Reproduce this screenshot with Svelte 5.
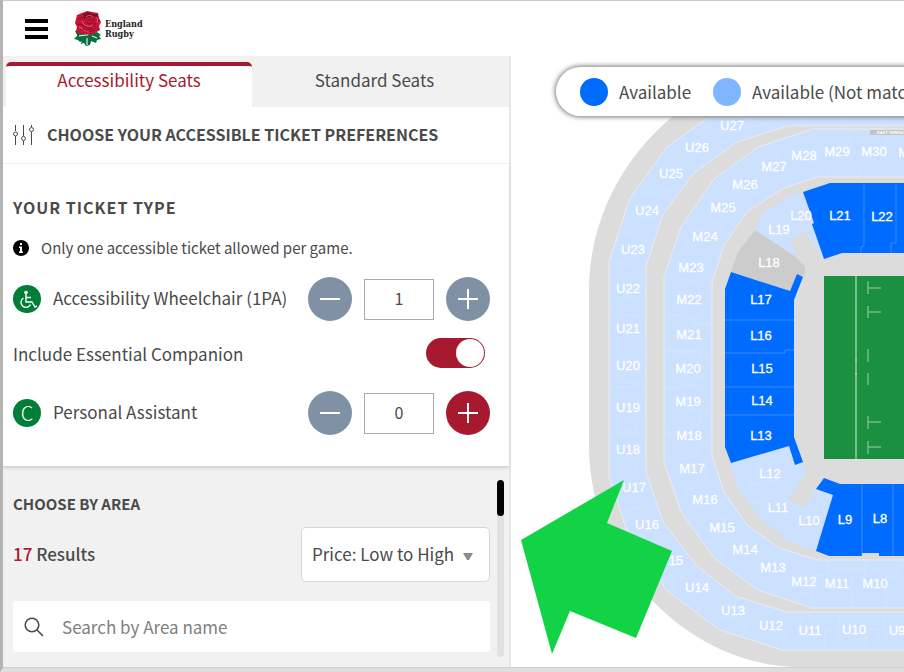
<script>
    let activeTab = $state('accessible');
    let wheelchair = $state(1);
    let assistant = $state(0);
    let companion = $state(true);
    let sort = $state('low');
    let search = $state('');

    const ringLabels = [
        ['U27', 732, 126], ['U26', 697, 148], ['U25', 671, 174], ['U24', 647, 211],
        ['U23', 633, 250], ['U22', 628, 289], ['U21', 628, 329], ['U20', 628, 366],
        ['U19', 628, 408], ['U18', 628, 450], ['U17', 634, 488], ['U16', 647, 525],
        ['U15', 671, 561], ['U14', 697, 588], ['U13', 733, 611], ['U12', 771, 626],
        ['U11', 810, 631], ['U10', 854, 630], ['U9', 897, 631],
        ['M31', 911, 153], ['M30', 874, 152], ['M29', 837, 152], ['M28', 804, 156],
        ['M27', 774, 167], ['M26', 745, 185], ['M25', 723, 208], ['M24', 705, 237],
        ['M23', 691, 268], ['M22', 689, 300], ['M21', 689, 335], ['M20', 688, 369],
        ['M19', 688, 402], ['M18', 689, 436], ['M17', 692, 469], ['M16', 705, 500],
        ['M15', 722, 528], ['M14', 745, 550], ['M13', 773, 568], ['M12', 804, 582],
        ['M11', 837, 584], ['M10', 875, 584], ['M9', 914, 584],
        ['L20', 801, 216], ['L19', 779, 230], ['L18', 769, 263],
        ['L12', 770, 474], ['L11', 778, 508], ['L10', 809, 521]
    ];

    const openLabels = [
        ['L21', 840, 216], ['L22', 882, 217], ['L17', 761, 300], ['L16', 761, 336],
        ['L15', 762, 369], ['L14', 762, 401], ['L13', 761, 436], ['L9', 845, 520],
        ['L8', 880, 519]
    ];

    // lines between neighbouring blocks
    const dividers = [
        'M748 117l6 10 14-5 10 10', 'M802 89v36', 'M840 89v36', 'M886 89v36',
        'M700 123l20 27', 'M668 147l30 25', 'M643 180l30 20', 'M621 227l3 5 10 2 2 3 16 6',
        'M609 262l31 4v16l5 1', 'M609 310h10v5h21v3', 'M645 355h-4v-10', 'M609 387h28v-2h8',
        'M609 433h15v-3h12v-9h4v-3', 'M609 477l27-5 2-15 5-2', 'M620 513l25-8 3-8',
        'M642 552l22-17', 'M668 592l28-28', 'M698 611l24-26', 'M742 637l12-28', 'M782 650l5-20h15v-18',
        'M825 650v-20h14v-18', 'M866 650v-21h18v-17',
        'M812 131l4 34', 'M850 129v36', 'M886 129v36', 'M827 177v-10', 'M861 177v-12',
        'M774 147l6 18 19 6', 'M744 157l35 38', 'M716 180l34 31', 'M695 206l35 29',
        'M680 235l12 10 2 4 18 8', 'M664 277l33 5 3 10 12 2', 'M664 315h19v3h12v6h17',
        'M664 351h35v7h13', 'M664 388h20v-3h12', 'M664 433h27v-8h8v-14h13', 'M664 462l33-7 3-12h12',
        'M676 494l28-10 4-12', 'M692 530l30-24', 'M714 558l32-31', 'M748 583l25-38', 'M777 597l10-17 10-6 6-17',
        'M811 607l3-32h14v-15', 'M851 608v-30h14v-18', 'M886 608v-31h12v-17',
        'M777 204l20 27', 'M738 487l38-7 14-18', 'M775 530l18-24'
    ];

    const pitchMarks = [
        'M868 281v13M868 288h13', 'M868 306v12M868 312h13', 'M868 349v13', 'M868 373v12',
        'M868 416v13M868 422h13', 'M868 441v13M868 447h13'
    ];
</script>

<div class="page">
    <header class="topbar">
        <button class="menu" aria-label="Menu"><span></span><span></span><span></span></button>
        <a class="brand" href="/" aria-label="England Rugby">
            <svg class="rose" viewBox="0 0 28 36" aria-hidden="true">
                <g fill="#08703f">
                    <path d="M1 20l7-1 5 5-3 3-6-1z" />
                    <path d="M0 28l4-4 7 1 2 3-7 3-2-2z" />
                    <path d="M9 26l6-2 3 3-2 7-4 1-2-3-3 1z" />
                    <path d="M14 24l9-3 4 3-2 1 2 3-4 1-1 3-5-2z" />
                </g>
                <path d="M5 25l7-1m1 3v7m5-9l5 2" stroke="#fff" fill="none" />
                <path d="M8 2l5-2 5 1 6 1 1 5 2 4-2 4 1 4-5 3-5 2-5-1-6 0-3-3 1-4-2-4 1-4 1-4z" fill="#c91335" />
                <path d="M9 3l6-2 4 2 5 0v4l-4-2-5 1-5 1z" fill="#74132a" />
                <path d="M5 9c1-3 4-3 5-1m0 0c3-4 10-3 10 1s-6 5-8 2m1-1c1-2 4-2 4 0M4 14c3-2 6 1 8 2s6 1 9-3 3-3 5-3M6 19c3-4 5 0 7 1s5 1 9-3m-10 3c2-2 4-2 6-2" stroke="#6d1428" fill="none" stroke-width=".8" />
                <path d="M8 10c2 5 7 7 11 4m3-8c2 1 2 4 1 6M5 16l4 2M12 6c2-2 5-2 7 0M10 20c2-1 3 1 5 1" stroke="#ef7a8d" fill="none" stroke-width=".7" />
            </svg>
            <span>England<br />Rugby</span>
        </a>
    </header>

    <main>
        <aside>
            <div class="tabs" role="tablist">
                <button role="tab" aria-selected={activeTab === 'accessible'} class:active={activeTab === 'accessible'} onclick={() => (activeTab = 'accessible')}>Accessibility Seats</button>
                <button role="tab" aria-selected={activeTab === 'standard'} class:active={activeTab === 'standard'} onclick={() => (activeTab = 'standard')}>Standard Seats</button>
            </div>

            <div class="preferences">
                <svg width="22" height="22" viewBox="0 0 22 22" fill="none" stroke="#4a4a4a" aria-hidden="true">
                    <path d="M2.500 1v6M2.500 12v9M10.500 1v11M10.500 17v4M18.500 1v2M18.500 8v13" />
                    <circle cx="2.500" cy="10" r="2" />
                    <circle cx="10.500" cy="14.500" r="2" />
                    <circle cx="18.500" cy="5.500" r="2" />
                </svg>
                <h1>CHOOSE YOUR ACCESSIBLE TICKET PREFERENCES</h1>
            </div>

            <section class="ticket-type">
                <h2>YOUR TICKET TYPE</h2>
                <p class="note">
                    <svg width="16" height="16" viewBox="0 0 16 16" aria-hidden="true">
                        <circle cx="8" cy="8" r="8" />
                        <path d="M7 3h2v2H7zM6 6.500h3v5h1V13H6v-1.500h1V8H6z" fill="#fff" />
                    </svg>
                    Only one accessible ticket allowed per game.
                </p>
                <div class="row">
                    <svg width="28" height="28" viewBox="0 0 28 28" aria-hidden="true">
                        <circle cx="14" cy="14" r="14" fill="#007d37" />
                        <circle cx="13" cy="7.500" r="1.800" fill="#fff" />
                        <path d="M13 9v8h6l3 5 2-1M13 12.500h5M10.500 13a5 5 0 1 0 7 6.500" fill="none" stroke="#fff" stroke-width="1.400" />
                    </svg>
                    <label for="wheelchair">Accessibility Wheelchair (1PA)</label>
                    <div class="stepper">
                        <button class="minus" aria-label="Remove wheelchair ticket" onclick={() => (wheelchair = Math.max(0, wheelchair - 1))}></button>
                        <input id="wheelchair" type="text" bind:value={wheelchair} />
                        <button class="plus" aria-label="Add wheelchair ticket"></button>
                    </div>
                </div>
                <div class="row companion">
                    <label for="companion">Include Essential Companion</label>
                    <input id="companion" class="toggle" type="checkbox" bind:checked={companion} />
                </div>
                <div class="row">
                    <span class="badge" aria-hidden="true">C</span>
                    <label for="assistant">Personal Assistant</label>
                    <div class="stepper">
                        <button class="minus" aria-label="Remove personal assistant" onclick={() => (assistant = Math.max(0, assistant - 1))}></button>
                        <input id="assistant" type="text" bind:value={assistant} />
                        <button class="plus enabled" aria-label="Add personal assistant" onclick={() => (assistant += 1)}></button>
                    </div>
                </div>
            </section>

            <section class="areas">
                <div class="areas-content">
                    <h2>CHOOSE BY AREA</h2>
                    <div class="results">
                        <p><span>17</span> Results</p>
                        <div class="select">
                            <select aria-label="Sort areas" bind:value={sort}>
                                <option value="low">Price: Low to High</option>
                                <option value="high">Price: High to Low</option>
                            </select>
                            <svg width="10" height="8" viewBox="0 0 10 8" aria-hidden="true"><path d="M0 0h10L6 7H4z" fill="#8d8d8d" /></svg>
                        </div>
                    </div>
                    <div class="search">
                        <svg width="20" height="20" viewBox="0 0 20 20" fill="none" stroke="#4a4a4a" stroke-width="1.600" aria-hidden="true">
                            <circle cx="8" cy="8" r="6.800" />
                            <path d="M13 13l6 6" />
                        </svg>
                        <input type="text" aria-label="Search by Area name" placeholder="Search by Area name" bind:value={search} />
                    </div>
                </div>
                <div class="scrollbar"><span></span></div>
            </section>
        </aside>

        <div class="map">
            <svg class="stadium" viewBox="511 56 393 611" preserveAspectRatio="xMinYMin slice" role="img" aria-label="Stadium seating map">
                <path d="M1100 69H800C690 69 589 170 589 290v156c0 120 101 221 211 221h300z" fill="#dcdcdc" />
                <g stroke="#ececec">
                    <path d="M1100 89H782l-62 20-53 38-37 51-21 64v215l19 57 40 58 52 38 62 20h318v-38H787l-52-16-39-31-33-43-17-50V266l17-52 31-41 43-31 50-16h313z" fill="#cce0ff" />
                    <path d="M1100 129H812l-54 18-45 33-32 47-17 50v185l17 50 33 46 44 32 54 18h288v-48H818l-39-12-32-23-23-33-12-37V283l12-38 23-33 35-23 36-12h282z" fill="#cce0ff" />
                </g>
                <g fill="#cce0ff">
                    <path d="M803 192l-11 3-29 18-8 17 35 27 6-6-6-10 14-10 20 28z" />
                    <path d="M731 463l58-17 6 19 6-2 5 4v6l-18 26 15 10 13-20 17 6-17 56-26-9-30-24-23-31z" />
                </g>
                <path d="M755 230l38 25 12 11v7l-2 4-6-3-7 17-59-19 7-20z" fill="#ccc" />
                <g fill="#006bff">
                    <path d="M803 192l27-9h270v70H842l-18 6-12-35 2-1z" />
                    <path d="M731 272l59 19 7-17 6 3-9 23v137l9 25-8 3-6-19-58 17-6-16V289z" />
                    <path d="M824 478l16 6h260v72H829l-13-5 17-56-17-6z" />
                </g>
                <path d="M864 183v63l-3 1v6M896 183v60h-5v10M725 320h69M725 353h60v-3h9M725 387h69M725 415h69M862 484v72M893 484v72" stroke="#3c8cff" fill="none" />
                <path d="M862 553h17v3h-17z" fill="#dcdcdc" />
                <path d="M824 276h276v183H824z" fill="#1c9041" />
                <path d="M856 276v183M855 360h2M855 374h2" stroke="#a9d6b6" stroke-width="1.300" />
                <g stroke="#9fceab" fill="none">
                    {#each pitchMarks as mark}
                        <path d={mark} />
                    {/each}
                </g>
                <g stroke="#d5e5fd" fill="none">
                    {#each dividers as line}
                        <path d={line} />
                    {/each}
                </g>
                <path d="M870 130h80v5h-80z" fill="#c4c4c4" />
                <text class="terrace" x="877" y="134">EAST TERRACE</text>
                <g class="labels">
                    {#each ringLabels as [name, x, y]}
                        <text {x} {y} dy="4">{name}</text>
                    {/each}
                </g>
                <g class="labels open">
                    {#each openLabels as [name, x, y]}
                        <text {x} {y} dy="4">{name}</text>
                    {/each}
                </g>
                <path d="M521 540l103-60-17 43 65 28-36 87-66-27-18 43z" fill="#12d345" />
            </svg>
            <ul class="legend">
                <li><i class="available"></i>Available</li>
                <li><i></i>Available (Not matching filters)</li>
            </ul>
        </div>
    </main>
</div>

<style>
    :global(body) {
        background: #dedede;
    }

    .page {
        display: flex;
        flex-direction: column;
        box-sizing: border-box;
        height: 100vh;
        border-top: 1px solid #c9c9c9;
        border-left: 3px solid #b4b4b4;
        border-bottom: 4px solid #dedede;
        overflow: hidden;
        background: #fff;
        color: #4a4a4a;
        font-family: "Noto Sans CJK SC", "Open Sans", sans-serif;
        font-size: 17px;
        line-height: 24px;
    }

    button, input, select {
        box-sizing: border-box;
        margin: 0;
        font: inherit;
        color: inherit;
    }

    button {
        border: 0;
        padding: 0;
        cursor: pointer;
    }

    h1, h2, p, ul {
        margin: 0;
        padding: 0;
    }

    .topbar {
        display: flex;
        align-items: center;
        gap: 26px;
        height: 55px;
        padding-left: 22px;
        flex-shrink: 0;
    }

    .menu {
        display: flex;
        flex-direction: column;
        gap: 4px;
        background: none;
    }

    .menu span {
        width: 23px;
        height: 4px;
        background: #000;
    }

    .brand {
        display: flex;
        align-items: center;
        gap: 3px;
        color: #222;
        font-family: "DejaVu Serif Condensed", "DejaVu Serif", serif;
        font-size: 9px;
        font-weight: bold;
        line-height: 10px;
        text-decoration: none;
    }

    .rose {
        width: 28px;
        height: 36px;
    }

    main {
        display: flex;
        flex: 1;
        min-height: 0;
        border-bottom: 1px solid #cfcfcf;
    }

    aside {
        display: flex;
        flex-direction: column;
        box-sizing: border-box;
        width: 508px;
        flex-shrink: 0;
        border-right: 2px solid #e6e6e6;
    }

    .tabs {
        display: flex;
        padding: 6px 12px 0 3px;
        background: #f1f1f1;
    }

    .tabs button {
        flex: 1;
        height: 45px;
        padding-bottom: 14px;
        border-top: 4px solid transparent;
        background: none;
    }

    .tabs button.active {
        flex: 0 0 246px;
        border-color: #a6192e;
        border-radius: 5px 5px 0 0;
        background: #fff;
        color: #a6192e;
    }

    .preferences {
        display: flex;
        align-items: center;
        gap: 12px;
        height: 56px;
        padding-left: 10px;
        border-bottom: 1px solid #f1f1f1;
    }

    .preferences svg {
        flex-shrink: 0;
    }

    h1 {
        padding-bottom: 2px;
        font-size: 16px;
        font-weight: bold;
        white-space: nowrap;
    }

    .ticket-type {
        position: relative;
        padding: 31px 19px 31px 10px;
        box-shadow: 0 2px 3px #ccc;
    }

    .ticket-type h2 {
        font-size: 16px;
        font-weight: bold;
        letter-spacing: 1px;
    }

    .note {
        display: flex;
        align-items: center;
        gap: 12px;
        margin: 17px 0;
        font-size: 15px;
    }

    .row {
        display: flex;
        align-items: center;
        gap: 12px;
    }

    .row label {
        flex: 1;
        padding-bottom: 2px;
    }

    .companion {
        height: 70px;
        padding-right: 5px;
        padding-bottom: 6px;
        box-sizing: border-box;
    }

    .companion label {
        padding: 2px 0 0;
    }

    .badge {
        width: 28px;
        border-radius: 50%;
        background: #007d37;
        color: #fff;
        font-weight: 300;
        font-size: 20px;
        line-height: 28px;
        text-align: center;
    }

    .stepper {
        display: flex;
        align-items: center;
        gap: 12px;
    }

    .stepper input {
        width: 70px;
        height: 41px;
        padding: 0 0 2px;
        border: 1px solid #aaa;
        text-align: center;
        font-size: 16px;
    }

    .stepper button {
        display: grid;
        place-items: center;
        width: 44px;
        height: 44px;
        border-radius: 50%;
        background: #8091a5;
    }

    .stepper button.enabled {
        background: #a6192e;
    }

    .stepper button::before, .plus::after {
        grid-area: 1 / 1;
        width: 20px;
        height: 2px;
        background: #fff;
        content: "";
    }

    .plus::after {
        width: 2px;
        height: 20px;
    }

    .toggle {
        display: flex;
        width: 59px;
        height: 30px;
        padding: 1px;
        border-radius: 15px;
        appearance: none;
        background: #aaa;
    }

    .toggle::after {
        width: 28px;
        height: 28px;
        border-radius: 50%;
        background: #fff;
        content: "";
    }

    .toggle:checked {
        justify-content: flex-end;
        background: #a6192e;
    }

    .areas {
        display: flex;
        flex: 1;
        gap: 7px;
        padding: 14px 5px 10px 10px;
        background: #f1f1f1;
    }

    .areas-content {
        flex: 1;
        padding-top: 12px;
    }

    .areas h2 {
        font-size: 15px;
    }

    .results {
        display: flex;
        align-items: center;
        justify-content: space-between;
        margin: 11px 0 19px;
    }

    .results p {
        padding-bottom: 2px;
        font-weight: 500;
    }

    .results span {
        color: #b31b34;
    }

    .select {
        display: grid;
        align-items: center;
        width: 189px;
    }

    .select select {
        grid-area: 1 / 1;
        height: 55px;
        padding: 0 10px 2px;
        border: 1px solid #d6d6d6;
        border-radius: 5px;
        appearance: none;
        background: #fff;
    }

    .select svg {
        grid-area: 1 / 1;
        justify-self: end;
        margin: 5px 17px 0 0;
        pointer-events: none;
    }

    .search {
        display: flex;
        align-items: center;
        gap: 18px;
        height: 51px;
        padding: 0 11px;
        border-radius: 4px;
        background: #fff;
    }

    .search input {
        flex: 1;
        min-width: 0;
        padding: 0;
        border: 0;
        background: none;
    }

    .search input::placeholder {
        color: #808080;
        opacity: 1;
    }

    .scrollbar {
        width: 7px;
        border-radius: 4px;
        background: #e1e1e1;
    }

    .scrollbar span {
        display: block;
        height: 36px;
        border-radius: 4px;
        background: #000;
    }

    .map {
        position: relative;
        flex: 1;
        min-width: 0;
        overflow: hidden;
    }

    .stadium {
        display: block;
        width: 100%;
        height: 100%;
    }

    .labels {
        fill: #fff;
        font-family: "Liberation Sans", Arial, sans-serif;
        font-size: 13px;
        text-anchor: middle;
        stroke: #fff;
        stroke-width: .3px;
    }

    .terrace {
        fill: #fff;
        font-family: "Liberation Sans", Arial, sans-serif;
        font-size: 4px;
        font-weight: bold;
    }

    .legend {
        position: absolute;
        top: 11px;
        left: 45px;
        display: flex;
        align-items: center;
        gap: 22px;
        height: 49px;
        padding: 0 24px;
        border-radius: 25px;
        background: #fff;
        box-shadow: 0 0 5px 1px #777;
        list-style: none;
        white-space: nowrap;
    }

    .legend li {
        display: flex;
        align-items: center;
        gap: 11px;
    }

    .legend i {
        width: 28px;
        height: 28px;
        border-radius: 50%;
        background: #80b5ff;
    }

    .legend .available {
        background: #006bff;
    }
</style>
